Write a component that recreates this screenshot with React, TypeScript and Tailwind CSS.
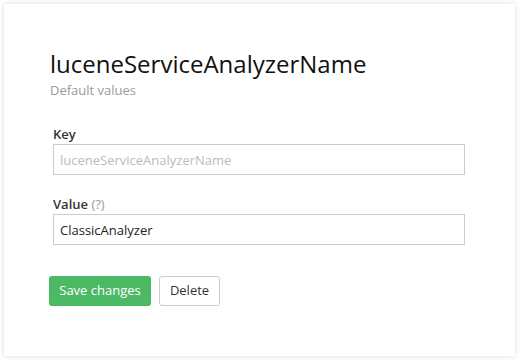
import React from "react";

const App: React.FC = () => {
  return (
    <div className="w-[519px] h-[360px] bg-white p-1 font-['Open_Sans',sans-serif]">
      <div className="w-[511px] h-[352px] bg-white shadow-[0_0_5px_rgba(0,0,0,0.14)] pl-[46px] pr-[50px] pt-[44px]">
        {/* Header */}
        <h1 className="text-[24px] leading-[32px] text-[#111]">luceneServiceAnalyzerName</h1>
        <p className="mt-[1px] text-[13px] leading-[18px] text-[#999]">Default values</p>

        <form className="mt-[26px] pl-[3px]" onSubmit={(e) => e.preventDefault()}>
          <div className="flex flex-col">
            <label className="text-[13px] leading-[18px] font-semibold text-[#333]">Key</label>
            <input
              className="mt-[1px] h-[31px] w-full border border-[#ccc] px-[6px] text-[13px] text-[#333] placeholder:text-[#bbb] outline-none"
              placeholder="luceneServiceAnalyzerName"
            />
          </div>

          <div className="flex flex-col mt-[20px]">
            <label className="text-[13px] leading-[18px] font-semibold text-[#333]">
              Value <span className="font-normal text-[#999]">(?)</span>
            </label>
            <input
              className="mt-[1px] h-[31px] w-full border border-[#ccc] px-[6px] text-[13px] text-[#222] outline-none"
              defaultValue="ClassicAnalyzer"
            />
          </div>

          <div className="flex gap-2 mt-[31px] -ml-[4px]">
            <button className="h-[30px] w-[102px] rounded-[3px] bg-[#4cb964] text-white text-[13px]">
              Save changes
            </button>
            <button className="h-[30px] w-[61px] rounded-[3px] border border-[#ccc] bg-white text-[#333] text-[13px]">
              Delete
            </button>
          </div>
        </form>
      </div>
    </div>
  );
};

export default App;
